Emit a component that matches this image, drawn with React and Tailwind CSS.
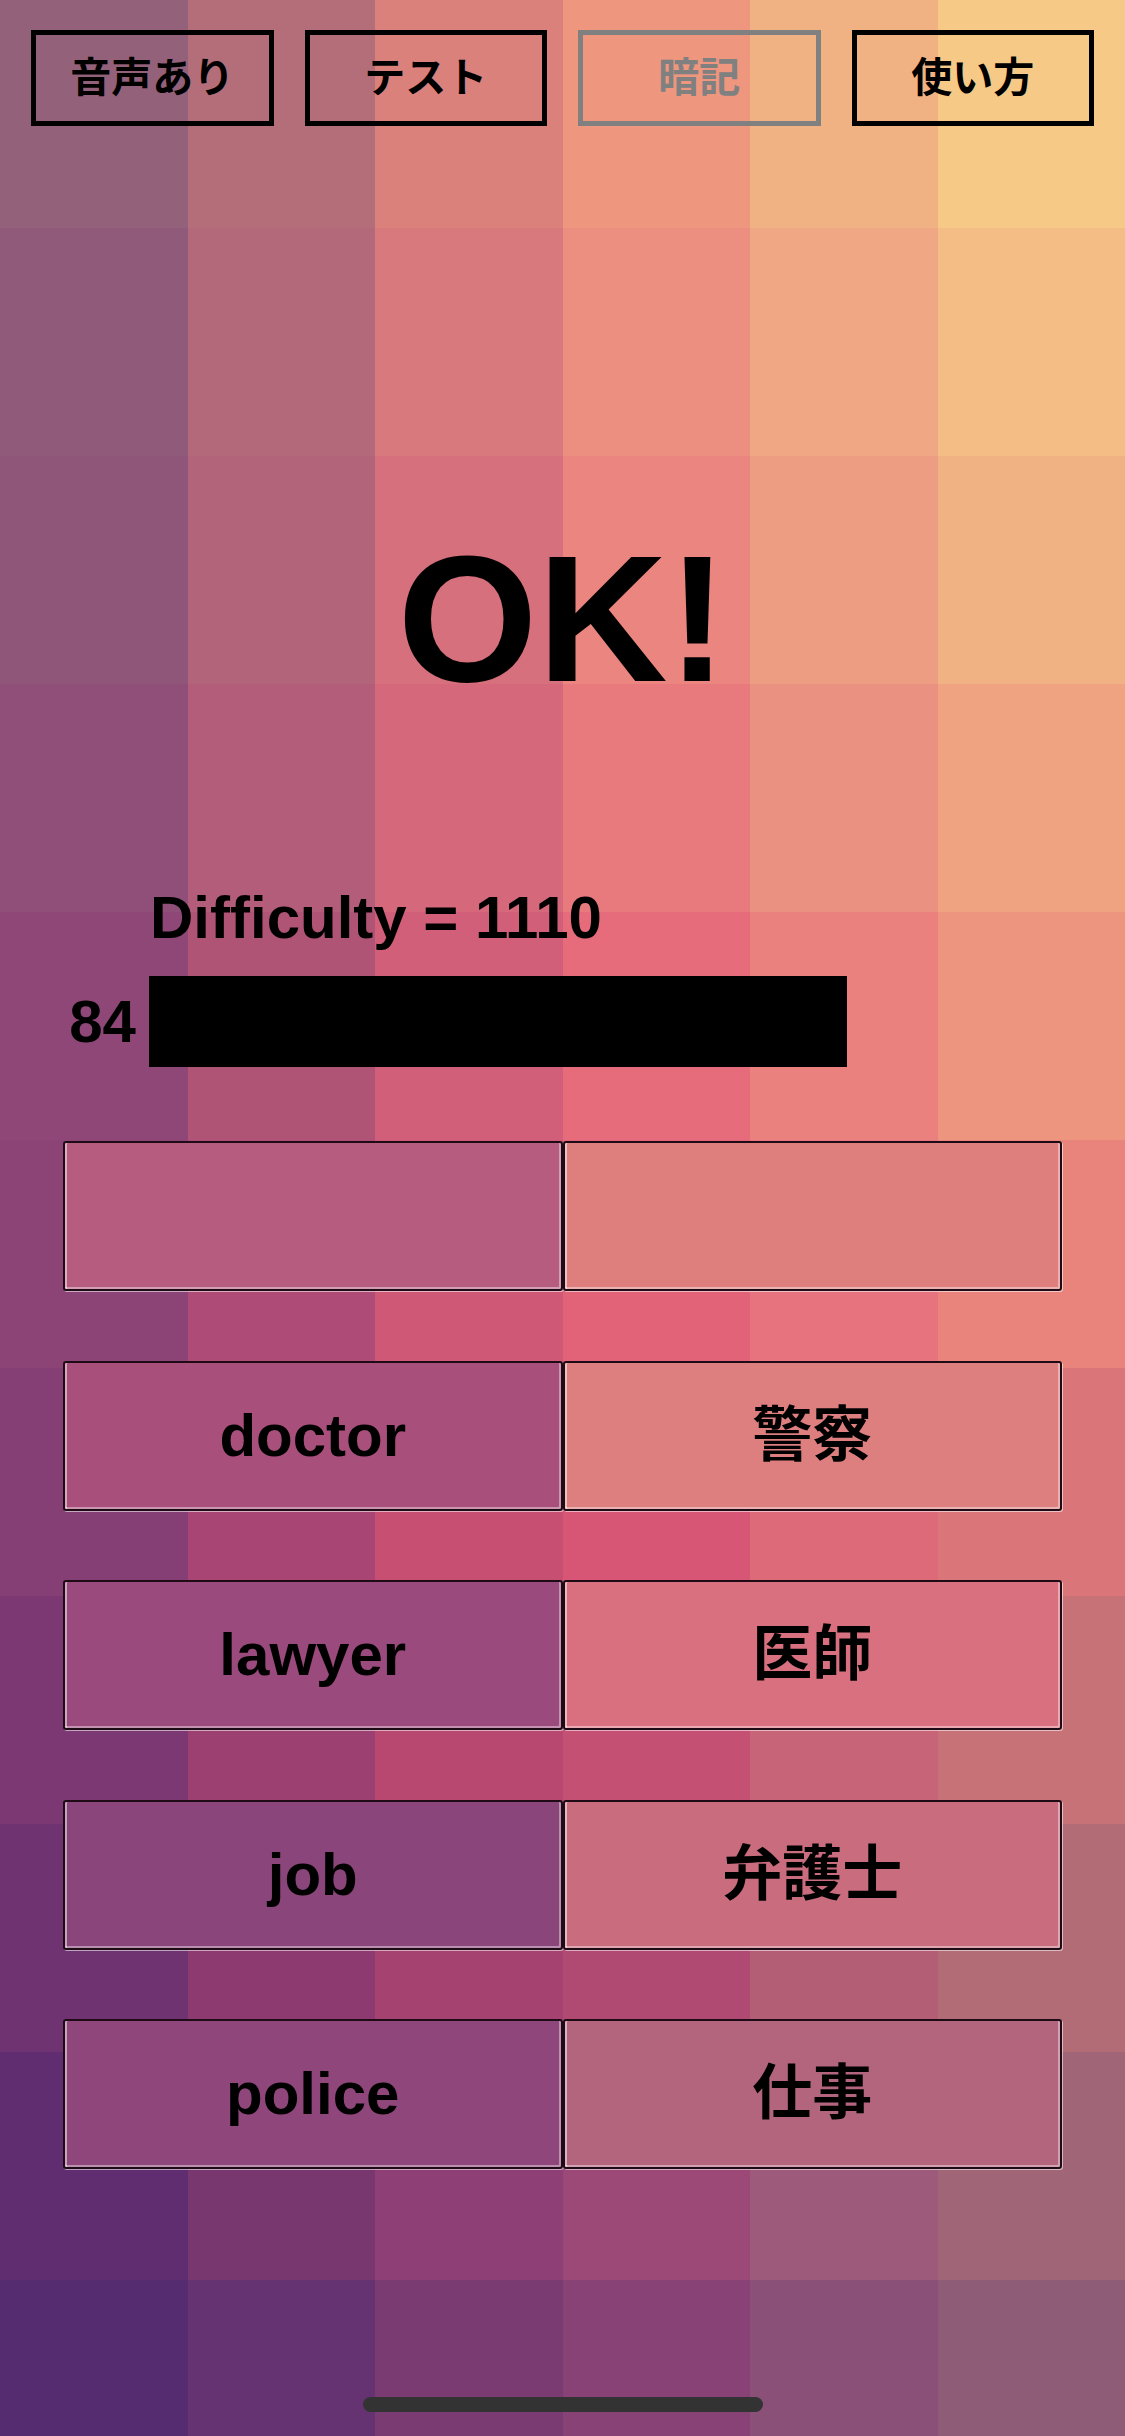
import React from 'react';

const tiles = [
  ['bg-[#94617a]', 'bg-[#b36e7a]', 'bg-[#da817c]', 'bg-[#ef967f]', 'bg-[#f1b283]', 'bg-[#f6c987]'],
  ['bg-[#905a7a]', 'bg-[#b3697a]', 'bg-[#d8797d]', 'bg-[#ec8e80]', 'bg-[#efa883]', 'bg-[#f3bd85]'],
  ['bg-[#8f567a]', 'bg-[#b2647a]', 'bg-[#d6707c]', 'bg-[#ea857f]', 'bg-[#ed9d82]', 'bg-[#f0b183]'],
  ['bg-[#8f4f78]', 'bg-[#b35d7b]', 'bg-[#d5687b]', 'bg-[#e87a7e]', 'bg-[#eb9181]', 'bg-[#efa381]'],
  ['bg-[#8e4776]', 'bg-[#b05476]', 'bg-[#d25f79]', 'bg-[#e66b7b]', 'bg-[#ea817e]', 'bg-[#ee9580]'],
  ['bg-[#8c4476]', 'bg-[#ae4b76]', 'bg-[#cf5877]', 'bg-[#e26378]', 'bg-[#e6737e]', 'bg-[#e8847c]'],
  ['bg-[#853f74]', 'bg-[#a84574]', 'bg-[#c74f72]', 'bg-[#d85675]', 'bg-[#dc6a79]', 'bg-[#da767a]'],
  ['bg-[#7b3872]', 'bg-[#9c3f71]', 'bg-[#b84870]', 'bg-[#c45174]', 'bg-[#c86477]', 'bg-[#c67276]'],
  ['bg-[#6e3370]', 'bg-[#8d3a70]', 'bg-[#a5426f]', 'bg-[#b04a72]', 'bg-[#b45e75]', 'bg-[#b26c75]'],
  ['bg-[#602e70]', 'bg-[#78376f]', 'bg-[#8e3f76]', 'bg-[#9d4977]', 'bg-[#9d5a7b]', 'bg-[#a06577]'],
  ['bg-[#552c70]', 'bg-[#663372]', 'bg-[#7a3a72]', 'bg-[#884275]', 'bg-[#8b5078]', 'bg-[#8f5c78]'],
];

const topButtons = [
  { label: '音声あり', dim: false },
  { label: 'テスト', dim: false },
  { label: '暗記', dim: true },
  { label: '使い方', dim: false },
];

const pairs = [
  { left: '', right: '', lbg: 'bg-[#b65c7f]', rbg: 'bg-[#de7f7e]' },
  { left: 'doctor', right: '警察', lbg: 'bg-[#a84f7b]', rbg: 'bg-[#de7f7f]' },
  { left: 'lawyer', right: '医師', lbg: 'bg-[#9a4a7c]', rbg: 'bg-[#d9707f]' },
  { left: 'job', right: '弁護士', lbg: 'bg-[#8a457a]', rbg: 'bg-[#c86c7e]' },
  { left: 'police', right: '仕事', lbg: 'bg-[#8f477b]', rbg: 'bg-[#b3657e]' },
];

// bevelled answer tile: dark rim, light inner edge on left/bottom/right, light drop line outside
const AnswerButton = ({ label, bg }) => (
  <button
    className={`flex h-[150px] flex-1 items-center justify-center rounded-[3px] border-2 border-[#1e0b15] text-[60px] font-bold leading-none text-black shadow-[inset_2px_0_0_rgba(255,255,255,0.5),inset_-2px_-2px_0_rgba(255,255,255,0.4),1px_1px_0_rgba(255,255,255,0.55)] ${bg}`}
  >
    {label}
  </button>
);

const App = () => {
  return (
    <div className="relative h-[2436px] w-[1125px] overflow-hidden font-['Liberation_Sans','Noto_Sans_CJK_JP',sans-serif]">
      {/* BACKGROUND TILES */}
      <div className="absolute inset-0 grid grid-cols-6">
        {tiles.flat().map((cls, i) => (
          <div key={i} className={`h-[228px] ${cls}`} />
        ))}
      </div>

      <div className="relative flex h-full flex-col">
        {/* TOP MENU */}
        <div className="flex gap-[31px] px-[31px] pt-[30px]">
          {topButtons.map((b) => (
            <button
              key={b.label}
              className={`flex h-[96px] flex-1 items-center justify-center border-[5px] text-[41px] font-bold leading-none ${
                b.dim ? 'border-[#808080] text-[#808080]' : 'border-black text-black'
              }`}
            >
              {b.label}
            </button>
          ))}
        </div>

        {/* RESULT */}
        <div className="mt-[403px] text-center text-[180px] font-bold leading-none text-black">OK!</div>

        {/* DIFFICULTY */}
        <div className="mt-[179px] pl-[150px] text-[60px] font-bold leading-none text-black">Difficulty = 1110</div>
        <div className="mt-[28px] flex items-center">
          <div className="w-[136px] text-right text-[60px] font-bold leading-none text-black">84</div>
          <div className="ml-[13px] h-[91px] w-[698px] bg-black" />
        </div>

        {/* ANSWERS */}
        <div className="mt-[74px] flex flex-col gap-[69.5px] px-[63px]">
          {pairs.map((p, i) => (
            <div key={i} className="flex">
              <AnswerButton label={p.left} bg={p.lbg} />
              <AnswerButton label={p.right} bg={p.rbg} />
            </div>
          ))}
        </div>

        {/* HOME INDICATOR */}
        <div className="mb-[24px] mt-auto h-[15px] w-[400px] self-center rounded-full bg-[#333333]" />
      </div>
    </div>
  );
};

export default App;
